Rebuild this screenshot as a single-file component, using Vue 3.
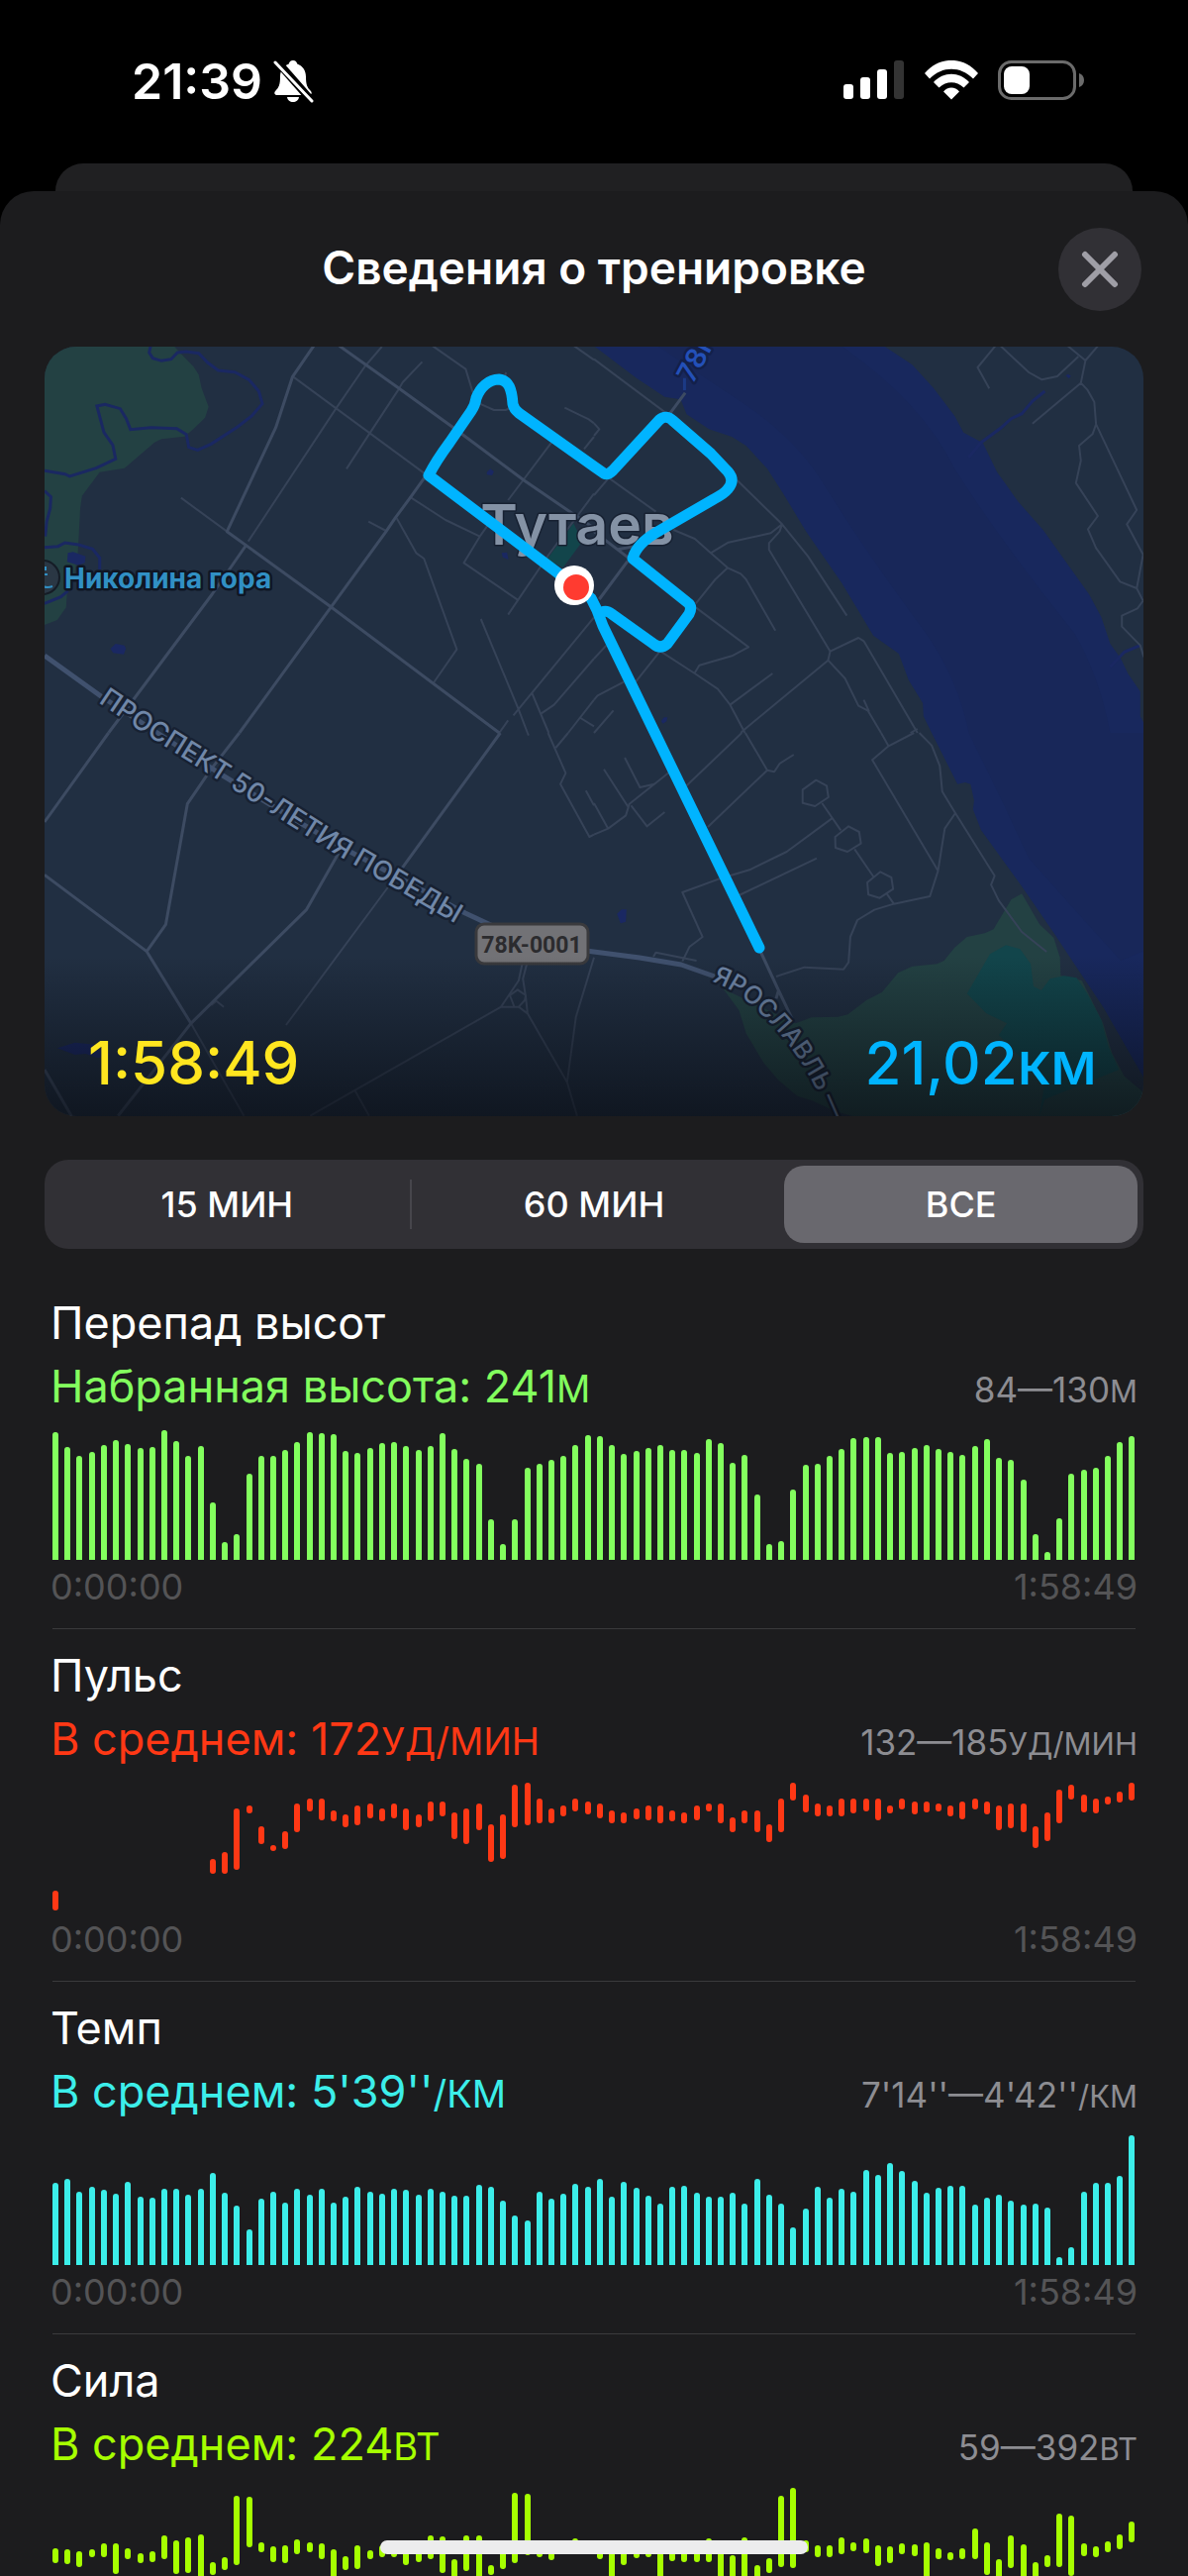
<script setup>
import { ref } from 'vue'

const ranges = ['15 МИН', '60 МИН', 'ВСЕ']
const selected = ref('ВСЕ')

// Height of the plot area in px, shared by every chart
const PLOT = 131
const BAR = 6

const elevation = [
  129, 114, 105, 109, 116, 121, 117, 113, 114, 131, 120, 105, 115, 58, 18, 26, 87, 105, 105, 111,
  119, 129, 128, 127, 110, 108, 113, 118, 119, 115, 111, 115, 128, 112, 102, 97, 41, 16, 41, 93,
  97, 101, 105, 116, 126, 125, 116, 107, 110, 113, 116, 111, 111, 108, 122, 118, 98, 106, 66, 16,
  19, 71, 96, 97, 105, 112, 123, 124, 124, 108, 109, 113, 116, 112, 109, 106, 115, 122, 103, 101,
  81, 26, 8, 42, 87, 91, 93, 105, 119, 125
]

const pace = [
  83, 87, 74, 79, 76, 72, 84, 69, 68, 77, 77, 71, 77, 93, 73, 60, 36, 67, 74, 63,
  77, 71, 77, 63, 69, 79, 74, 72, 77, 76, 71, 77, 74, 70, 70, 81, 79, 65, 50, 45,
  74, 67, 72, 82, 79, 87, 69, 84, 78, 70, 62, 79, 80, 73, 69, 69, 73, 62, 87, 71,
  62, 38, 57, 79, 68, 77, 74, 96, 91, 103, 95, 85, 73, 78, 80, 80, 61, 68, 71, 65,
  61, 62, 58, 8, 18, 74, 83, 83, 90, 131
]

// [lowest, highest] beats per minute; null where the sensor had no reading
const pulse = [
  [132, 138], ...Array(12).fill(null), [148, 152], [148, 155], [150, 174], [174, 175], [161, 166],
  [158, 158], [159, 164], [166, 176], [175, 178], [171, 178], [171, 173], [168, 171], [169, 175],
  [172, 176], [171, 174], [172, 176], [167, 174], [168, 171], [171, 177], [173, 177], [163, 172],
  [161, 174], [167, 176], [153, 167], [154, 171], [168, 184], [169, 185], [170, 178], [170, 174],
  [173, 175], [175, 178], [174, 177], [172, 176], [170, 173], [170, 172], [172, 174], [171, 175],
  [170, 175], [171, 173], [170, 172], [171, 175], [175, 176], [170, 176], [166, 170], [170, 173],
  [166, 173], [162, 167], [166, 178], [180, 185], [175, 180], [173, 176], [173, 175], [173, 178],
  [174, 178], [175, 178], [171, 178], [174, 175], [176, 178], [174, 177], [175, 177], [175, 176],
  [173, 175], [172, 177], [176, 178], [174, 177], [167, 175], [168, 176], [166, 176], [159, 166],
  [162, 172], [170, 182], [180, 184], [175, 180], [174, 178], [178, 179], [179, 181], [180, 185]
]

// [top, bottom] of each bar, measured from the top of the plot
const power = [
  [61, 76], [62, 77], [64, 80], [62, 70], [56, 70], [56, 87], [61, 72], [66, 76], [64, 75], [48, 72],
  [53, 87], [50, 86], [47, 98], [75, 88], [70, 83], [8, 78], [9, 60], [55, 65], [59, 75], [58, 76],
  [52, 67], [55, 65], [56, 72], [62, 94], [69, 83], [58, 82], [63, 72], [58, 70], [61, 70], [61, 78],
  [61, 75], [48, 72], [49, 86], [72, 98], [48, 84], [48, 98], [78, 88], [64, 82], [5, 76], [6, 68],
  [58, 70], [61, 73], [58, 67], [51, 64], [58, 64], [61, 72], [61, 98], [61, 78], [59, 71], [58, 70],
  [58, 98], [61, 74], [61, 75], [61, 75], [51, 75], [61, 98], [68, 98], [50, 94], [78, 98], [71, 86],
  [8, 80], [0, 81], [53, 65], [58, 70], [58, 70], [50, 67], [55, 64], [51, 66], [58, 79], [59, 76],
  [56, 67], [57, 69], [55, 94], [61, 72], [65, 73], [61, 72], [41, 72], [55, 88], [72, 98], [48, 81],
  [57, 94], [75, 98], [68, 80], [26, 80], [28, 89], [56, 69], [59, 70], [54, 65], [47, 62], [34, 55]
]

const PX_PER_BEAT = 2.32
const columns = (list) => list.map((h) => ({ top: PLOT - h, height: h }))
const beats = (list) =>
  list.map((p) =>
    p
      ? { top: Math.round((185 - p[1]) * PX_PER_BEAT), height: Math.round((p[1] - p[0]) * PX_PER_BEAT + BAR) }
      : { top: 0, height: 0 }
  )
const spans = (list) => list.map(([top, bottom]) => ({ top, height: bottom - top }))

const metrics = [
  { id: 'elevation', title: 'Перепад высот', label: 'Набранная высота:', value: '241', unit: 'М', range: '84—130', flat: true, bars: columns(elevation) },
  { id: 'pulse', title: 'Пульс', label: 'В среднем:', value: '172', unit: 'УД/МИН', range: '132—185', bars: beats(pulse) },
  { id: 'pace', title: 'Темп', label: 'В среднем:', value: "5'39''", unit: '/КМ', range: "7'14''—4'42''", flat: true, bars: columns(pace) },
  { id: 'power', title: 'Сила', label: 'В среднем:', value: '224', unit: 'ВТ', range: '59—392', bars: spans(power) }
]
</script>

<template>
  <div class="screen">
    <header class="status">
      <div class="clock">
        <span>21:39</span>
        <svg width="42" height="46" viewBox="0 0 42 46" aria-hidden="true">
          <path d="M21 2c-2.400 0-4 1.600-4.200 3.600C11 7.600 8 12.500 8 18.500c0 8-1.500 11-4.500 14C1.500 34.500 2 37 5 37h32c3 0 3.500-2.500 1.500-4.500-3-3-4.500-6-4.500-14 0-6-3-10.900-8.800-12.900C25 3.600 23.400 2 21 2zM15 39h12c-.5 3.500-3 5-6 5s-5.500-1.500-6-5z" fill="#fff" />
          <path d="M4 2l36 41" stroke="#000" stroke-width="8" />
          <path d="M3 4l37 39" stroke="#fff" stroke-width="3" stroke-linecap="round" />
        </svg>
      </div>
      <div class="indicators">
        <svg width="62" height="40" viewBox="0 0 62 40" aria-hidden="true">
          <rect x="0" y="24" width="10" height="15" rx="3" fill="#fff" />
          <rect x="17" y="17" width="10" height="22" rx="3" fill="#fff" />
          <rect x="34" y="9" width="10" height="30" rx="3" fill="#fff" />
          <rect x="51" y="0" width="10" height="39" rx="3" fill="#333" />
        </svg>
        <svg width="54" height="40" viewBox="0 0 54 40" aria-hidden="true">
          <path d="M0 13C15-4.500 39-4.500 54 13l-5 5.500C36 5.500 18 5.500 5 18.500zM9 22C19 11 35 11 45 22l-5.500 5.500C32 20.500 22 20.500 14.500 27.500zM27 39.500l-8-8c4-5.500 12-5.500 16 0z" fill="#fff" />
        </svg>
        <svg width="88" height="40" viewBox="0 0 88 40" aria-hidden="true">
          <rect x="1.500" y="1.500" width="76" height="37" rx="12" fill="none" stroke="#6b6b6b" stroke-width="3" />
          <rect x="6" y="6" width="26" height="28" rx="8" fill="#fff" />
          <path d="M82 13c3 1 5 3.500 5 7s-2 6-5 7z" fill="#6b6b6b" />
        </svg>
      </div>
    </header>

    <div class="sheet-behind"></div>

    <main class="sheet">
      <div class="bar">
        <h1>Сведения о тренировке</h1>
        <button type="button" class="close" aria-label="Закрыть">
          <svg width="40" height="40" viewBox="0 0 40 40" aria-hidden="true">
            <path d="M5 5l30 30M35 5L5 35" stroke="#9f9ea6" stroke-width="6" stroke-linecap="round" />
          </svg>
        </button>
      </div>

      <section class="map" aria-label="Маршрут">
        <svg class="chart-map" viewBox="45 350 1110 777">
          <defs>
            <linearGradient id="shade" x1="0" y1="0" x2="0" y2="1">
              <stop offset="0" stop-color="#070a10" stop-opacity="0" />
              <stop offset="1" stop-color="#070a10" stop-opacity=".66" />
            </linearGradient>
            <path id="avenue" d="M99 709L151 744 215 784 272 820 340 863 397 896 480 944" />
            <path id="highway" d="M719 991Q748 1002 768 1023 790 1044 806 1068 818 1086 825 1102L846 1150" />
          </defs>
          <rect x="45" y="350" width="1110" height="777" fill="#212f42" />

          <!-- North-west tile -->
          <g class="tile" transform="translate(40 340) scale(.357143 .333333)">
            <path class="park" d="M14 28H380L400 52 435 90 450 115 458 155 478 212 468 245 435 280 410 302 345 310 325 320 240 398 170 410 120 482 115 520 108 660 95 740 78 770 75 820 50 858 14 873z" />
            <path class="grove" d="M1510 565L1535 620 1480 700 1435 675z" />
            <path class="pond" d="M80 655L95 652 130 665 128 685 110 692 78 682zM200 945L215 930 240 935 244 945 238 962 208 958zM1265 410L1275 400 1285 408 1280 420 1265 418zM1307 655L1322 653 1326 675 1310 668z" />
            <path class="stream" d="M314 28L310 48 320 65 345 73 372 68 390 48 415 45 450 50 475 78 505 102 552 107 592 130 620 165 630 203 600 240 560 273 485 325 447 343 422 335 415 296 388 278 315 275 257 281 245 248 228 218 185 205 162 210 182 290 207 328 215 370 160 398 85 423 72 416 14 406M14 467L32 485 30 520 20 560 16 605M14 638L52 635 72 624 110 630 150 643 170 670V705M14 808L60 788 80 770" />
            <path class="lane" d="M718 122L1090 415M968 30L920 90 838 218 590 620M1082 76L1027 138 1015 160 932 295 868 400M1112 28L1205 98 1225 168M1245 203L1285 222H1318L1345 210M1310 130L1320 108M400 488L530 590M1050 487L1148 555 1245 605M930 560L980 588M1010 550L1065 655 1087 672 1180 947 1115 1047M1275 560L1245 605 1200 685 1352 797M1448 320L1325 495M1568 303L1540 340M1568 475L1440 660 1325 842M1485 215L1553 250 1568 262M1512 28L1568 70M1248 855L1355 1130 1380 1200M1568 850L1340 1147M1568 975L1455 1115 1418 1142M1392 1078L1440 1200M1325 1162L1300 1200M1568 1100L1495 1200M1530 1155L1568 1180" />
            <path class="road" d="M775 28L715 122 668 275 530 590 820 815 1300 1200M848 28L1015 155 1170 275 1370 435 1568 580M1090 425L1050 485 1005 550 980 590 565 1200M585 630L488 780 195 1200" />
          </g>

          <!-- North-east tile -->
          <g class="tile" transform="translate(600 340) scale(.357143 .333333)">
            <path class="water" d="M0 28H820L900 85 960 155 1020 240 1045 290 1100 322 1140 410 1200 500 1270 585 1400 780 1435 850 1460 930 1490 975 1510 1020 1545 1075V1150L1555 1170V1200H955L932 1150 930 1110 890 1040 862 960 790 905 700 745 600 590 535 475 490 400 430 330 390 303 325 280 262 235 245 190 200 182 120 125z" />
            <path class="deep" d="M180 28H700Q930 200 1020 400 1150 620 1360 900 1430 1030 1460 1200H1060Q1030 1040 940 900 760 640 640 430 560 300 420 200z" />
            <path class="stream" d="M1275 165L1240 195 1210 233 1180 248 1150 277 1095 320 1060 365M1545 935L1500 955 1460 1000" />
            <path class="pond" d="M1334 118L1341 113 1349 119 1343 126zM190 1165L198 1153 208 1153 205 1165 195 1172z" />
            <path class="lane" d="M0 68L205 232M0 262L15 280 0 300M40 430L0 480M45 430L175 530M225 585L285 612 330 655 378 700 415 718 430 735 513 890M330 655L380 623 500 595 532 568M405 435L532 568 605 665 715 845M532 568L525 590 495 625V645L668 953 748 912 763 922 915 1200M668 953L662 980 425 1190 415 1200M662 980L710 1035 748 1118 775 1133 812 1200M763 1100L778 1135M378 700L343 735 288 808M288 820L437 940 390 967 298 995 285 1018M187 952L285 1020 350 1067 385 1115 427 1200M505 1020L385 1115M187 952L118 1045M85 1045L10 1087 0 1100M0 975L35 935M55 1132L0 1200M915 1188L895 1200M1135 28L1085 93 1118 157M1150 28L1230 108 1267 130 1310 120 1370 60M1340 28L1390 72 1377 140 1395 160 1415 198 1420 265 1410 295 1372 330 1377 375 1363 443 1425 543 1397 583 1420 640 1488 742 1535 762 1553 800 1537 823 1493 845V878L1545 935 1555 970M1425 28L1390 72M1377 140L1240 263M1420 265L1535 525 1507 568 1553 660 1535 762" />
            <path class="road" d="M258 170L215 232M95 680L15 795M0 590L95 668M65 645L110 635" />
            <path class="bridge" d="M256 125V162" />
          </g>

          <!-- South-west tile -->
          <g class="tile" transform="translate(40 740) scale(.357143 .333333)">
            <path class="pond" d="M50 955L100 938 165 945 200 975 165 985 130 972 100 975z" />
            <path class="lane" d="M985 468L697 885M428 880L578 1160M485 825L500 812 521 830M1305 830L765 1160M893 1085L932 1160M1365 700L1355 750 1305 830H1355L1380 850 1492 1058 1520 1160M1378 700L1367 745 1375 800 1380 850M1355 830L1372 810 1375 795 1352 778 1330 795 1342 828M1568 680L1517 860 1492 1058M1438 0L1488 122 1473 155 1555 315 1568 308M1495 0L1460 45M1545 175L1568 220M1380 0L1383 8" />
            <path class="road" d="M195 0L14 270M565 0L485 110 418 215 357 580 303 662M14 430L303 662 428 880M845 365L755 535 428 880 222 1160M1303 0L1025 410M14 1020L90 1160" />
          </g>

          <!-- South-east tile -->
          <g class="tile" transform="translate(600 740) scale(.357143 .333333)">
            <path class="water" d="M955 0H1555V1045L1440 830 1365 710 1300 605 1210 465 1095 295 1072 232 1075 205 1065 155 1050 150 1028 155z" />
            <path class="deep" d="M1060 0H1555V660L1490 690 1380 560 1230 380 1160 220z" />
            <path class="park" d="M365 775L410 840 430 910 480 1000 520 1050 575 1100 620 1115 680 1145 735 1162H1555V1090L1500 1040 1465 970 1440 880 1380 750 1320 735 1318 680 1300 620 1260 580 1210 487 1180 505 1130 595 1105 607 1055 618 1020 650 990 690 970 700 900 707 860 727 815 785 770 810 718 853 690 860 615 862 570 880z" />
            <path class="grove" d="M1090 725L1120 670 1165 643 1205 655 1235 700 1243 768 1265 780 1290 745 1330 736 1365 742 1395 790 1435 870 1455 950 1485 1020 1275 1110 1260 1160 1275 1060 1145 915 1168 880 1110 850 1055 790z" />
            <path class="pond" d="M65 548L78 535H92L90 572 75 577z" />
            <path class="lane" d="M418 0L262 160M428 0L490 113 322 285M490 113L510 118 525 93 565 66M0 308L40 290 90 250 100 215 212 120M28 110L97 225M87 75L130 165 170 155M105 220L150 283 200 240M0 213L40 290M628 143L658 160 663 195 625 222 590 212V172zM720 283L750 300 755 335 717 360 683 348 682 315zM810 421L841 438 846 473 808 500 776 490 773 453zM645 213L698 295M737 352L790 435M828 487L848 518M672 260L545 360 440 415 360 440 250 483 307 618 270 648 250 692M630 380L410 492M168 678L175 665 290 690M515 738L595 710 706 716 720 695 725 618 745 567 793 536 848 518 950 495 973 418 787 82 833 40 905 0M973 418L992 290 1022 243M812 0L833 40M920 0L955 38 978 100 985 178 1022 243 1133 433 1123 460 1145 508 1210 603 1280 663" />
            <path class="road" d="M470 660L522 780 560 865M522 780L515 805" />
          </g>

          <path class="trunk" d="M45 662L102 703 225 783 300 829 350 858 470 922 500 936M592 960L646 967 688 974 722 986" />

          <circle cx="43" cy="583" r="17" fill="#2a3744" stroke="#151c26" stroke-width="2" />
          <path d="M43 575h4M43 580h5M46 572v4M43 592q5 2 10 0" fill="none" stroke="#3190c4" stroke-width="2" />

          <text class="place" x="65" y="594">Николина гора</text>
          <text class="city" x="583" y="550" text-anchor="middle">Тутаев</text>
          <text class="street avenue"><textPath href="#avenue">ПРОСПЕКТ 50-ЛЕТИЯ ПОБЕДЫ</textPath></text>
          <text class="street"><textPath href="#highway">ЯРОСЛАВЛЬ —</textPath></text>
          <text class="crossing" transform="translate(700 388) rotate(-62)">78К</text>

          <rect x="481" y="933" width="113" height="40" rx="8" fill="#727276" stroke="#3a3a3d" stroke-width="3" />
          <text class="shield" x="537" y="962" text-anchor="middle">78K-0001</text>

          <rect x="45" y="965" width="1110" height="162" fill="url(#shade)" />

          <path class="route" d="M580 591L433 480Q440 466 454 447L476 415Q480 409 481 402C485 391 494 383 504 383 514 384 517 393 518 408Q519 413 524 417L600 471 610 478Q614 480 619 475L666 424Q673 418 680 425L718 458 735 476Q743 485 735 494 732 498 721 504L664 537Q643 549 639 564L694 608Q700 612 696 620L674 650Q667 656 660 650L618 620Q613 616 608 618" />
          <path class="route" d="M580 591L597 604 603 616 609 632 767 957" />
          <circle cx="580" cy="591" r="20" fill="#fff" />
          <circle cx="582" cy="593" r="13" fill="#ff3b30" />
        </svg>
        <div class="totals">
          <span class="duration">1:58:49</span>
          <span class="distance">21,02км</span>
        </div>
      </section>

      <div class="segments" role="group" aria-label="Интервал">
        <button
          v-for="r in ranges"
          :key="r"
          type="button"
          :class="{ active: r === selected }"
          :aria-pressed="r === selected"
          @click="selected = r"
        >{{ r }}</button>
      </div>

      <section v-for="m in metrics" :key="m.id" class="metric" :class="m.id">
        <h2>{{ m.title }}</h2>
        <div class="summary">
          <p class="average">{{ m.label }} {{ m.value }}<span class="unit">{{ m.unit }}</span></p>
          <p class="range">{{ m.range }}<span class="unit">{{ m.unit }}</span></p>
        </div>
        <div class="bars" :class="{ flat: m.flat }">
          <i v-for="(b, i) in m.bars" :key="i" :style="{ marginTop: b.top + 'px', height: b.height + 'px' }"></i>
        </div>
        <div class="times"><span>0:00:00</span><span>1:58:49</span></div>
      </section>
    </main>

    <div class="home"></div>
  </div>
</template>

<style>
body {
  margin: 0;
  background: #000;
}
</style>

<style scoped>
.screen {
  position: relative;
  display: flex;
  flex-direction: column;
  height: 100vh;
  overflow: hidden;
  background: #000;
  color: #fff;
  font-family: Inter, "Liberation Sans", sans-serif;
}
h1, h2, p {
  margin: 0;
}
button {
  border: 0;
  padding: 0;
  color: inherit;
  font: inherit;
  cursor: pointer;
}
svg {
  display: block;
}
.status {
  display: flex;
  flex: none;
  justify-content: space-between;
  box-sizing: border-box;
  height: 165px;
  padding: 52px 104px 0 133px;
}
.clock {
  display: flex;
  gap: 10px;
  height: 60px;
  align-items: center;
  font-size: 50px;
  font-weight: 600;
  line-height: 60px;
}
.indicators {
  display: flex;
  gap: 20px;
  height: 58px;
  align-items: center;
}
.sheet-behind {
  flex: none;
  height: 28px;
  margin: 0 56px;
  border-radius: 30px 30px 0 0;
  background: #202022;
}
.sheet {
  flex: 1;
  min-height: 0;
  overflow: hidden;
  padding: 0 45px;
  border-radius: 34px 34px 0 0;
  background: #1c1c1e;
}
.bar {
  display: grid;
  grid-template-columns: 84px 1fr 84px;
  align-items: center;
  height: 157px;
  margin: 0 2px;
}
h1 {
  grid-column: 2;
  padding-bottom: 3px;
  font-size: 46px;
  font-weight: 600;
  line-height: 58px;
  text-align: center;
}
.close {
  display: grid;
  place-items: center;
  width: 84px;
  height: 84px;
  border-radius: 50%;
  background: #313035;
}
.map {
  position: relative;
  overflow: hidden;
  border-radius: 32px;
}
.chart-map {
  width: 100%;
  height: auto;
}
.tile path {
  vector-effect: non-scaling-stroke;
}
.park { fill: #234143; }
.grove { fill: #12454b; }
.pond { fill: #1a2862; }
.water { fill: #18285d; }
.deep { fill: #182759; }
.stream {
  fill: none;
  stroke: #1a2862;
  stroke-width: 3;
}
.lane, .road, .bridge, .trunk {
  fill: none;
  stroke-linejoin: round;
}
.lane {
  stroke: #364358;
  stroke-width: 2;
}
.road {
  stroke: #3d4b62;
  stroke-width: 3;
}
.bridge {
  stroke: #1c3a85;
  stroke-width: 3;
}
.trunk {
  stroke: #40516e;
  stroke-width: 5;
}
.route {
  fill: none;
  stroke: #00b4ff;
  stroke-width: 11;
  stroke-linecap: round;
  stroke-linejoin: round;
}
.chart-map text {
  paint-order: stroke;
  stroke: #172132;
  stroke-width: 5;
  stroke-linejoin: round;
}
.chart-map .place {
  fill: #3190c4;
  stroke: #0f1624;
  font-size: 28px;
  font-weight: 700;
}
.chart-map .city {
  fill: #8492a5;
  stroke-width: 3;
  font-size: 57px;
  font-weight: 600;
}
.street {
  fill: #7087a8;
  font-size: 25px;
  font-weight: 500;
}
.avenue {
  font-size: 27px;
}
.chart-map .crossing {
  fill: #2350b8;
  stroke: #13204a;
  font-size: 28px;
  font-weight: 600;
}
.chart-map .shield {
  fill: #2b2b2e;
  stroke: none;
  font-family: Roboto, sans-serif;
  font-size: 23px;
  font-weight: 700;
}
.totals {
  position: absolute;
  right: 47px;
  bottom: 18px;
  left: 44px;
  display: flex;
  justify-content: space-between;
  font-size: 60px;
  font-weight: 500;
  line-height: 72px;
}
.duration { color: #ffe620; }
.distance { color: #00b4ff; }
.segments {
  display: grid;
  grid-template-columns: repeat(3, 1fr);
  gap: 14px;
  box-sizing: border-box;
  height: 90px;
  margin: 44px 0 28px;
  padding: 6px;
  border-radius: 24px;
  background: #313035;
}
.segments button {
  position: relative;
  border-radius: 20px;
  background: none;
  font-size: 36px;
  font-weight: 500;
}
.segments .active {
  background: #69686e;
}
.segments button:first-child::after {
  position: absolute;
  top: 14px;
  right: -8px;
  bottom: 14px;
  width: 2px;
  background: #47464c;
  content: "";
}
.metric {
  margin: 0 8px;
  padding: 18px 0 20px;
  border-bottom: 1px solid #3a3a3c;
}
h2 {
  margin-left: -2px;
  font-size: 45px;
  font-weight: 400;
  line-height: 58px;
}
.summary {
  display: flex;
  align-items: baseline;
  justify-content: space-between;
  height: 68px;
  margin: 0 -2px;
}
.average {
  font-size: 45px;
  line-height: 70px;
}
.average .unit {
  font-size: 38px;
}
.range {
  color: #8d8d92;
  font-size: 35px;
}
.range .unit {
  font-size: 31px;
}
.bars {
  display: flex;
  align-items: flex-start;
  justify-content: space-between;
  height: 131px;
  margin-top: 11px;
}
.bars i {
  width: 6px;
  border-radius: 3px;
  background: currentColor;
}
.bars.flat i {
  border-radius: 3px 3px 0 0;
}
.elevation .average, .elevation .bars { color: #83ff5e; }
.pulse .average, .pulse .bars { color: #ff3815; }
.pace .average, .pace .bars { color: #3ceeea; }
.power .average, .power .bars { color: #a6ff00; }
.times {
  display: flex;
  justify-content: space-between;
  margin: 5px -2px 0;
  color: #545456;
  font-size: 36px;
  line-height: 44px;
}
.home {
  position: absolute;
  bottom: 22px;
  left: 50%;
  width: 36%;
  height: 14px;
  border-radius: 7px;
  background: #ececed;
  transform: translateX(-50%);
}
</style>
